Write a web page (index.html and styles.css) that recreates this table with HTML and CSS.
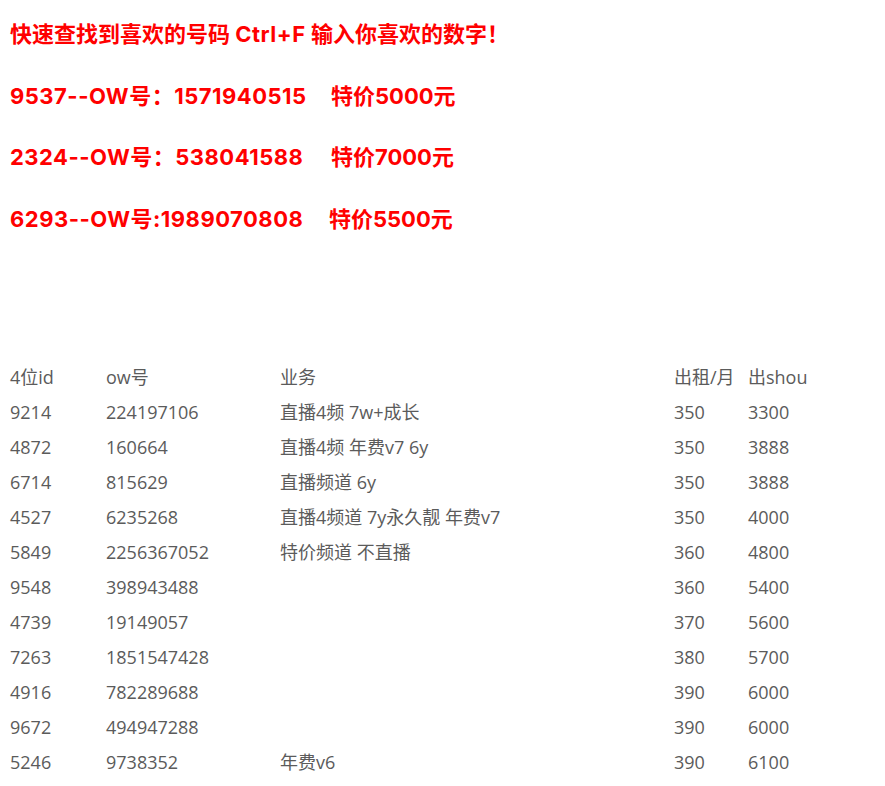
FILE: index.html
```html
<!DOCTYPE html>
<html lang="zh">
<head>
<meta charset="utf-8">
<title>OW号</title>
<link rel="stylesheet" href="styles.css">
</head>
<body>
<div class="page">
  <div class="promo">
    <p class="line">快速查找到喜欢的号码 <span class="key">Ctrl+F</span> 输入你喜欢的数字！</p>
    <p class="line"><span class="num n1">9537--OW号：1571940515</span><span class="price">特价5000元</span></p>
    <p class="line"><span class="num n2">2324--OW号：538041588</span><span class="price">特价7000元</span></p>
    <p class="line"><span class="num n3">6293--OW号:1989070808</span><span class="price">特价5500元</span></p>
  </div>
  <div class="table">
    <div class="row"><span>4位id</span><span>ow号</span><span>业务</span><span>出租/月</span><span>出shou</span></div>
    <div class="row"><span>9214</span><span>224197106</span><span>直播4频 7w+成长</span><span>350</span><span>3300</span></div>
    <div class="row"><span>4872</span><span>160664</span><span>直播4频 年费v7 6y</span><span>350</span><span>3888</span></div>
    <div class="row"><span>6714</span><span>815629</span><span>直播频道 6y</span><span>350</span><span>3888</span></div>
    <div class="row"><span>4527</span><span>6235268</span><span>直播4频道 7y永久靓 年费v7</span><span>350</span><span>4000</span></div>
    <div class="row"><span>5849</span><span>2256367052</span><span>特价频道 不直播</span><span>360</span><span>4800</span></div>
    <div class="row"><span>9548</span><span>398943488</span><span></span><span>360</span><span>5400</span></div>
    <div class="row"><span>4739</span><span>19149057</span><span></span><span>370</span><span>5600</span></div>
    <div class="row"><span>7263</span><span>1851547428</span><span></span><span>380</span><span>5700</span></div>
    <div class="row"><span>4916</span><span>782289688</span><span></span><span>390</span><span>6000</span></div>
    <div class="row"><span>9672</span><span>494947288</span><span></span><span>390</span><span>6000</span></div>
    <div class="row"><span>5246</span><span>9738352</span><span>年费v6</span><span>390</span><span>6100</span></div>
  </div>
</div>
</body>
</html>
```
FILE: styles.css
```css
html, body {
  margin: 0;
  padding: 0;
  background: #fff;
}
body {
  font-family: "Open Sans", "Noto Sans CJK SC", sans-serif;
}
.page {
  padding: 4px 0 0 10px;
}
.promo {
  color: #f00;
  font-family: "Inter", "Noto Sans CJK SC", sans-serif;
  font-weight: 700;
  font-size: 22px;
}
.line {
  margin: 0;
  height: 61.5px;
  line-height: 61.5px;
  white-space: nowrap;
}
.key {
  letter-spacing: 0.5px;
}
.num {
  display: inline-block;
  letter-spacing: 0.5px;
}
.n1 { width: 321px; }
.n2 { width: 321px; }
.n3 { width: 319px; }
.table {
  margin-top: 110px;
  color: #5b5b5b;
  font-size: 18px;
}
.row {
  display: grid;
  grid-template-columns: 96px 174px 394px 74px 100px;
  height: 35px;
  line-height: 35px;
  white-space: nowrap;
}
```
